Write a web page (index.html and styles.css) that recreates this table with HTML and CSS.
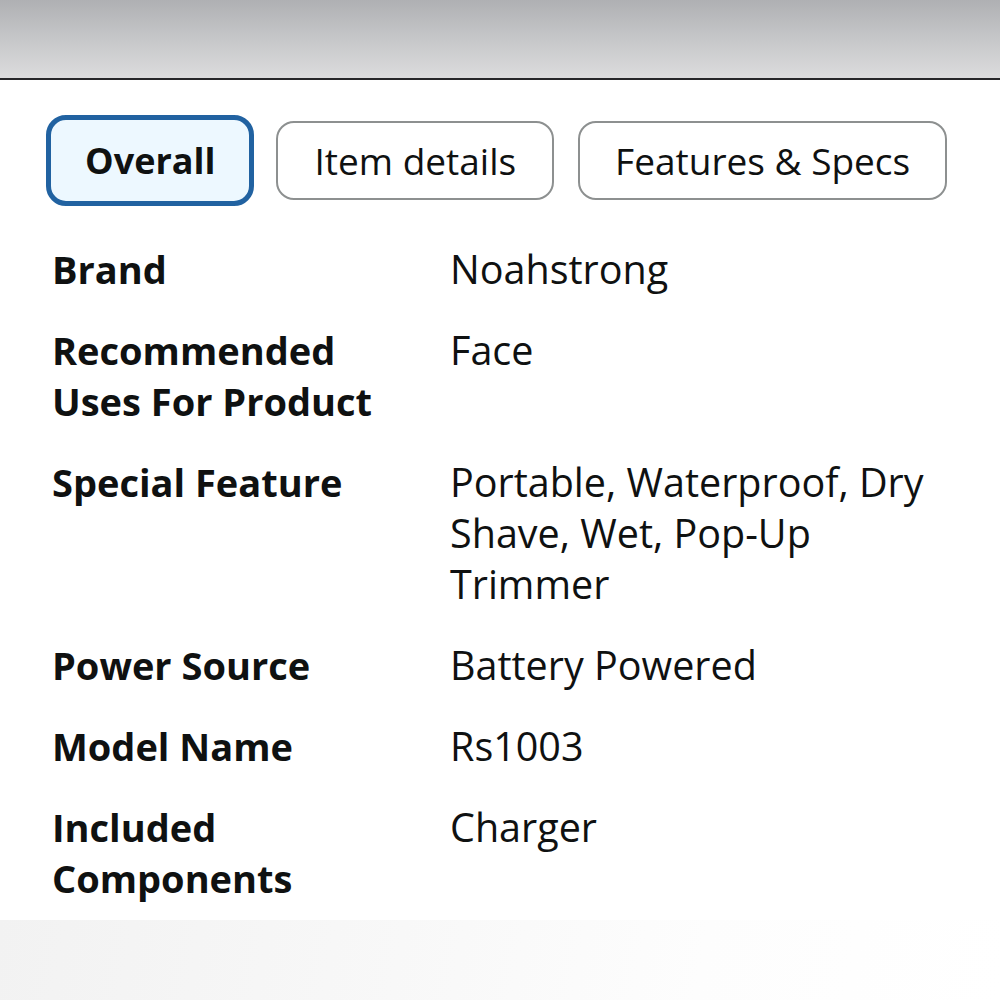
FILE: index.html
```html
<!DOCTYPE html>
<html lang="en">
<head>
	<meta charset="UTF-8" />
	<title>Product details</title>
	<link rel="stylesheet" href="styles.css">
</head>
<body>
	<div class="topbar"></div>
	<div class="content">
		<div class="tabs">
			<div class="tab active">Overall</div>
			<div class="tab">Item details</div>
			<div class="tab">Features &amp; Specs</div>
		</div>
		<div class="specs">
			<div class="label">Brand</div>
			<div class="value">Noahstrong</div>
			<div class="label">Recommended Uses For Product</div>
			<div class="value">Face</div>
			<div class="label">Special Feature</div>
			<div class="value">Portable, Waterproof, Dry Shave, Wet, Pop-Up Trimmer</div>
			<div class="label">Power Source</div>
			<div class="value">Battery Powered</div>
			<div class="label">Model Name</div>
			<div class="value">Rs1003</div>
			<div class="label">Included Components</div>
			<div class="value">Charger</div>
		</div>
	</div>
	<div class="fade"></div>
</body>
</html>
```

FILE: styles.css
```css
html,body {
	margin: 0;
	padding: 0;
	background: #fff;
}
body {
	font-family: "Open Sans", "Noto Sans", sans-serif;
	color: #0f1111;
	height: 1000px;
	overflow: hidden;
}
.topbar {
	height: 78px;
	background: linear-gradient(180deg, #afb0b3 0%, #c6c7c9 50%, #dcdcdd 100%);
	border-bottom: 2px solid #262729;
}
.content {
	padding: 35px 0 16px 46px;
}
.tabs {
	display: flex;
	align-items: center;
	gap: 22px;
}
.tab {
	box-sizing: border-box;
	height: 79px;
	padding: 0 36px;
	border: 2px solid #8d9090;
	border-radius: 18px;
	display: flex;
	align-items: center;
	font-size: 37px;
	white-space: nowrap;
}
.tab.active {
	height: 91px;
	padding: 0 34px;
	border: 5px solid #2162a1;
	border-radius: 20px;
	background: #edf8ff;
	font-weight: 700;
	font-size: 36px;
}
.tab + .tab + .tab {
	margin-left: 2px;
	padding: 0 35px;
}
.specs {
	margin-top: 38px;
	padding-left: 6px;
	display: grid;
	grid-template-columns: 345px 500px;
	column-gap: 53px;
	row-gap: 30px;
	line-height: 51px;
}
.label {
	font-weight: 700;
	font-size: 38px;
}
.value {
	font-size: 39.5px;
}
.fade {
	height: 80px;
	background: linear-gradient(100deg, #f2f2f2 0%, #f8f8f8 40%, #fdfdfd 70%, #ffffff 100%);
}
```
